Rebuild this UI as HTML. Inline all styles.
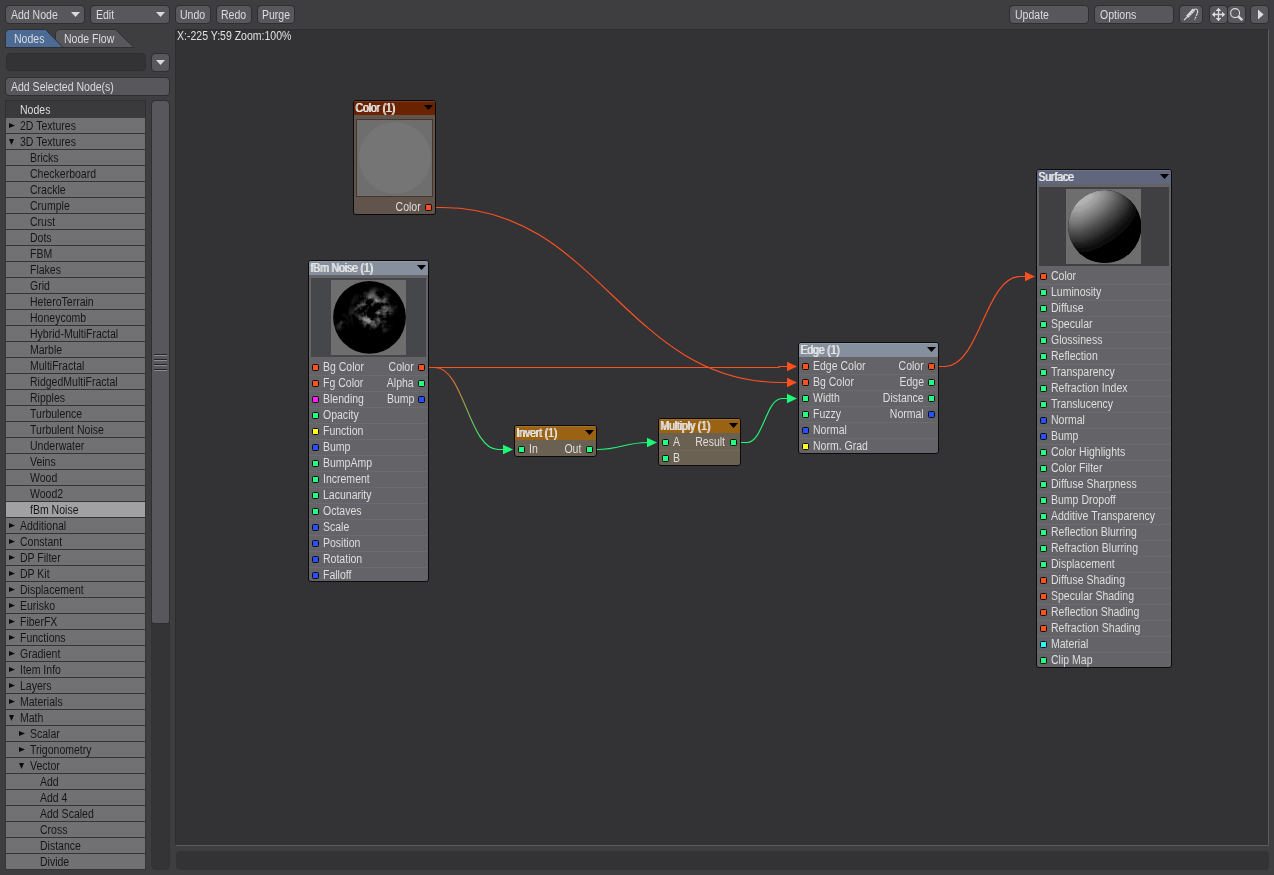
<!DOCTYPE html>
<html><head><meta charset="utf-8"><title>Node Editor</title><style>
*{box-sizing:border-box;margin:0;padding:0}
html,body{width:1274px;height:875px;overflow:hidden;background:#3e3e41;}
body{position:relative;font-family:"Liberation Sans",sans-serif;font-size:12px;color:#dcdcdc;line-height:1}
.a{position:absolute}
.t{display:inline-block;transform:scaleX(0.876);transform-origin:0 50%;white-space:nowrap}
.tr{display:inline-block;transform:scaleX(0.876);transform-origin:100% 50%;white-space:nowrap}
.btn{position:absolute;background:#58585c;border-radius:3.5px;box-shadow:0 0 0 1px #2f2f31;height:17px;top:6px;line-height:18px;padding-left:5px;white-space:nowrap}
.dd:after{content:"";position:absolute;right:4px;top:6px;width:9px;height:5px;background:#dadada;clip-path:polygon(0 0,100% 0,50% 100%)}
.p4{padding-left:4px}
.p0{padding-left:0}
.row{position:absolute;left:6px;width:139px;height:15px;background:#717173;color:#161616;line-height:16px;white-space:nowrap}
.row.sel{background:#a1a1a3}
.tri-r{position:absolute;top:5px;width:6px;height:5px;background:#0c0c0c;clip-path:polygon(0 0,100% 50%,0 100%)}
.tri-d{position:absolute;top:5px;width:5px;height:6px;background:#0c0c0c;clip-path:polygon(0 0,100% 0,50% 100%)}
.node{position:absolute;border:1px solid #0b0b0b;border-radius:3px;overflow:hidden}
.nh{position:absolute;left:0;top:0;right:0;height:14px;box-shadow:inset 0 1px 0 rgba(255,255,255,0.1);line-height:15px;padding-left:0.5px;color:#e4e4e4;white-space:nowrap}
.nh .t{text-shadow:1.1px 0 0 #e4e4e4;letter-spacing:-0.15px}
.nh:after{content:"";position:absolute;right:2px;top:4px;width:9px;height:5px;background:#000;clip-path:polygon(0 0,100% 0,50% 100%)}
.pl{position:absolute;height:16px;line-height:16px;white-space:nowrap;color:#dedede}
.dot{position:absolute;width:7px;height:7px;border-radius:1.5px;border:1px solid #0a0a0a}
.sep{position:absolute;left:0;right:0;height:1px;background:rgba(255,255,255,0.05)}
</style></head><body>
<div class="btn dd" style="left:6px;width:78px"><span class="t">Add Node</span></div>
<div class="btn dd" style="left:91px;width:78px"><span class="t">Edit</span></div>
<div class="btn p4" style="left:176px;width:34px"><span class="t">Undo</span></div>
<div class="btn p4" style="left:217px;width:34px"><span class="t">Redo</span></div>
<div class="btn p4" style="left:258px;width:36px"><span class="t">Purge</span></div>
<div class="btn " style="left:1010px;width:78px"><span class="t">Update</span></div>
<div class="btn " style="left:1095px;width:78px"><span class="t">Options</span></div>
<div class="btn p0" style="left:1180px;width:22px"><svg class="a" style="left:0;top:0" width="22" height="17" viewBox="0 0 22 17" fill="none" stroke="#dcdcdc"><path d="M4 14.1 L7.6 10.5" stroke-width="1.1"/><path d="M7.3 10.7 L13.9 3.6" stroke-width="3.1"/><path d="M9.3 9.5 l0.1 -0.1 M11.2 7.4 l0.1 -0.1 M13 5.4 l0.1 -0.1" stroke="#68686c" stroke-width="0.9" stroke-linecap="round"/><path d="M14 3.5 C15.6 2.5 17.6 3.2 17.7 5.3 C17.7 6.3 17.4 7 17 8" stroke-width="1.15"/><path d="M17 8 L14.5 14" stroke-width="1.15" stroke-dasharray="2 0.9"/></svg></div>
<div class="btn p0" style="left:1210px;width:17px"><svg class="a" style="left:0;top:0" width="17" height="17" viewBox="0 0 17 17" fill="#dcdcdc" stroke="#dcdcdc"><path d="M3 8.5 H14 M8.5 3 V14" stroke-width="1.3" fill="none"/><path d="M8.5 1.8 L11.3 5 H5.7 Z M8.5 15.2 L11.3 12 H5.7 Z M1.8 8.5 L5 5.7 V11.3 Z M15.2 8.5 L12 5.7 V11.3 Z" stroke="none"/></svg></div>
<div class="btn p0" style="left:1228px;width:17px"><svg class="a" style="left:0;top:0" width="17" height="17" viewBox="0 0 17 17" fill="none" stroke="#dcdcdc"><circle cx="7.1" cy="7.1" r="4.5" stroke-width="1.15"/><path d="M10.2 10.4 L14.3 14.2" stroke-width="2.4"/></svg></div>
<div class="btn p0" style="left:1251px;width:17px"><svg class="a" style="left:0;top:0" width="17" height="17" viewBox="0 0 17 17" fill="#dcdcdc"><path d="M7 3.6 L12.6 8.5 L7 13.4 Z"/></svg></div>
<svg class="a" style="left:0;top:24px" width="140" height="28" viewBox="0 24 140 28"><path d="M55.5 47.5 V33.5 Q55.5 29.5 59.5 29.5 H115.5 L134 47.5 Z" fill="#58585c" stroke="#2f2f31" stroke-width="1"/><path d="M5.5 47.5 V33.5 Q5.5 29.5 9.5 29.5 H45.5 L63 47.5 Z" fill="#4b6b94" stroke="#2f2f31" stroke-width="1"/></svg>
<div class="a" style="left:14px;top:32px;line-height:15px"><span class="t">Nodes</span></div>
<div class="a" style="left:64px;top:32px;line-height:15px"><span class="t">Node Flow</span></div>
<div class="a" style="left:6px;top:53px;width:140px;height:18px;background:#333335;border-radius:4px;border:1px solid #2f2f31"></div>
<div class="btn dd" style="left:152px;top:54px;width:17px"></div>
<div class="btn" style="left:6px;top:78px;width:163px"><span class="t">Add Selected Node(s)</span></div>
<div class="a" style="left:5px;top:100px;width:141px;height:18px;background:#3a3a3c;border:1px solid #2f2f31;border-bottom:0;line-height:19px;padding-left:14px"><span class="t">Nodes</span></div>
<div class="a" style="left:5px;top:118px;width:141px;height:752px;background:#353537"></div>
<div class="row" style="top:118px;padding-left:14px"><i class="tri-r" style="left:3px"></i><span class="t">2D Textures</span></div>
<div class="row" style="top:134px;padding-left:14px"><i class="tri-d" style="left:3px"></i><span class="t">3D Textures</span></div>
<div class="row" style="top:150px;padding-left:24px"><span class="t">Bricks</span></div>
<div class="row" style="top:166px;padding-left:24px"><span class="t">Checkerboard</span></div>
<div class="row" style="top:182px;padding-left:24px"><span class="t">Crackle</span></div>
<div class="row" style="top:198px;padding-left:24px"><span class="t">Crumple</span></div>
<div class="row" style="top:214px;padding-left:24px"><span class="t">Crust</span></div>
<div class="row" style="top:230px;padding-left:24px"><span class="t">Dots</span></div>
<div class="row" style="top:246px;padding-left:24px"><span class="t">FBM</span></div>
<div class="row" style="top:262px;padding-left:24px"><span class="t">Flakes</span></div>
<div class="row" style="top:278px;padding-left:24px"><span class="t">Grid</span></div>
<div class="row" style="top:294px;padding-left:24px"><span class="t">HeteroTerrain</span></div>
<div class="row" style="top:310px;padding-left:24px"><span class="t">Honeycomb</span></div>
<div class="row" style="top:326px;padding-left:24px"><span class="t">Hybrid-MultiFractal</span></div>
<div class="row" style="top:342px;padding-left:24px"><span class="t">Marble</span></div>
<div class="row" style="top:358px;padding-left:24px"><span class="t">MultiFractal</span></div>
<div class="row" style="top:374px;padding-left:24px"><span class="t">RidgedMultiFractal</span></div>
<div class="row" style="top:390px;padding-left:24px"><span class="t">Ripples</span></div>
<div class="row" style="top:406px;padding-left:24px"><span class="t">Turbulence</span></div>
<div class="row" style="top:422px;padding-left:24px"><span class="t">Turbulent Noise</span></div>
<div class="row" style="top:438px;padding-left:24px"><span class="t">Underwater</span></div>
<div class="row" style="top:454px;padding-left:24px"><span class="t">Veins</span></div>
<div class="row" style="top:470px;padding-left:24px"><span class="t">Wood</span></div>
<div class="row" style="top:486px;padding-left:24px"><span class="t">Wood2</span></div>
<div class="row sel" style="top:502px;padding-left:24px"><span class="t">fBm Noise</span></div>
<div class="row" style="top:518px;padding-left:14px"><i class="tri-r" style="left:3px"></i><span class="t">Additional</span></div>
<div class="row" style="top:534px;padding-left:14px"><i class="tri-r" style="left:3px"></i><span class="t">Constant</span></div>
<div class="row" style="top:550px;padding-left:14px"><i class="tri-r" style="left:3px"></i><span class="t">DP Filter</span></div>
<div class="row" style="top:566px;padding-left:14px"><i class="tri-r" style="left:3px"></i><span class="t">DP Kit</span></div>
<div class="row" style="top:582px;padding-left:14px"><i class="tri-r" style="left:3px"></i><span class="t">Displacement</span></div>
<div class="row" style="top:598px;padding-left:14px"><i class="tri-r" style="left:3px"></i><span class="t">Eurisko</span></div>
<div class="row" style="top:614px;padding-left:14px"><i class="tri-r" style="left:3px"></i><span class="t">FiberFX</span></div>
<div class="row" style="top:630px;padding-left:14px"><i class="tri-r" style="left:3px"></i><span class="t">Functions</span></div>
<div class="row" style="top:646px;padding-left:14px"><i class="tri-r" style="left:3px"></i><span class="t">Gradient</span></div>
<div class="row" style="top:662px;padding-left:14px"><i class="tri-r" style="left:3px"></i><span class="t">Item Info</span></div>
<div class="row" style="top:678px;padding-left:14px"><i class="tri-r" style="left:3px"></i><span class="t">Layers</span></div>
<div class="row" style="top:694px;padding-left:14px"><i class="tri-r" style="left:3px"></i><span class="t">Materials</span></div>
<div class="row" style="top:710px;padding-left:14px"><i class="tri-d" style="left:3px"></i><span class="t">Math</span></div>
<div class="row" style="top:726px;padding-left:24px"><i class="tri-r" style="left:13px"></i><span class="t">Scalar</span></div>
<div class="row" style="top:742px;padding-left:24px"><i class="tri-r" style="left:13px"></i><span class="t">Trigonometry</span></div>
<div class="row" style="top:758px;padding-left:24px"><i class="tri-d" style="left:13px"></i><span class="t">Vector</span></div>
<div class="row" style="top:774px;padding-left:34px"><span class="t">Add</span></div>
<div class="row" style="top:790px;padding-left:34px"><span class="t">Add 4</span></div>
<div class="row" style="top:806px;padding-left:34px"><span class="t">Add Scaled</span></div>
<div class="row" style="top:822px;padding-left:34px"><span class="t">Cross</span></div>
<div class="row" style="top:838px;padding-left:34px"><span class="t">Distance</span></div>
<div class="row" style="top:854px;padding-left:34px"><span class="t">Divide</span></div>
<div class="a" style="left:152px;top:101px;width:17px;height:768px;background:#343436;border-radius:4px;box-shadow:0 0 0 1px #323234"></div>
<div class="a" style="left:152px;top:101px;width:17px;height:522px;background:#58585c;border-radius:4px 4px 2px 2px;box-shadow:0 0 0 1px #2f2f31"></div>
<div class="a" style="left:154px;top:354px;width:13px;height:1px;background:#242426"></div>
<div class="a" style="left:154px;top:355px;width:13px;height:1px;background:#8c8c90"></div>
<div class="a" style="left:154px;top:359px;width:13px;height:1px;background:#242426"></div>
<div class="a" style="left:154px;top:360px;width:13px;height:1px;background:#8c8c90"></div>
<div class="a" style="left:154px;top:364px;width:13px;height:1px;background:#242426"></div>
<div class="a" style="left:154px;top:365px;width:13px;height:1px;background:#8c8c90"></div>
<div class="a" style="left:154px;top:369px;width:13px;height:1px;background:#242426"></div>
<div class="a" style="left:154px;top:370px;width:13px;height:1px;background:#8c8c90"></div>
<div class="a" style="left:175px;top:29px;width:1094px;height:817px;background:#333335;border-left:1px solid #2d2d2f;border-top:1px solid #2d2d2f;border-right:1px solid #5b5b5d;border-bottom:1px solid #5b5b5d"></div>
<div class="a" style="left:177px;top:29px;line-height:14px;color:#e0e0e0"><span class="t">X:-225 Y:59 Zoom:100%</span></div>
<div class="a" style="left:176px;top:851px;width:1093px;height:19px;background:#333335;border-radius:4px"></div>
<svg class="a" style="left:0;top:0" width="1274" height="875" viewBox="0 0 1274 875" fill="none" stroke-width="1.15"><defs><linearGradient id="rg" gradientUnits="userSpaceOnUse" x1="440" y1="370" x2="490" y2="445"><stop offset="0" stop-color="#ff5020"/><stop offset="1" stop-color="#20f878"/></linearGradient></defs><path d="M436 207.5 H442 C598.4 207.5 625.6 382.5 782 382.5 H788" stroke="#ff5020"/><path d="M429 367.5 H779 V366.5 H788" stroke="#ff5020"/><path d="M429 367.5 H435 C464.0 367.5 469.0 449.5 498 449.5 H504" stroke="url(#rg)"/><path d="M597 449.5 H597 C620.5 449.5 624.5 442.5 648 442.5 H648" stroke="#20f878"/><path d="M741 442.5 H747 C763.1 442.5 765.9 398.5 782 398.5 H788" stroke="#20f878"/><path d="M939 366.5 H945 C979.5 366.5 985.5 276.5 1020 276.5 H1026" stroke="#ff5020"/><path d="M797 382.5 L787 377.7 V387.3 Z" fill="#ff5020"/><path d="M797 366.5 L787 361.7 V371.3 Z" fill="#ff5020"/><path d="M513 449.5 L503 444.7 V454.3 Z" fill="#20f878"/><path d="M657 442.5 L647 437.7 V447.3 Z" fill="#20f878"/><path d="M797 398.5 L787 393.7 V403.3 Z" fill="#20f878"/><path d="M1035 276.5 L1025 271.7 V281.3 Z" fill="#ff5020"/></svg>
<div class="node" style="left:353px;top:100px;width:83px;height:115px;background:#60544c">
<div class="nh" style="background:#692300"><span class="t">Color (1)</span></div>
<div class="a" style="left:2px;top:18px;width:77px;height:78px;background:#6e6e6e;border:1px solid #46362d"><div class="a" style="left:1.5px;top:2px;width:72px;height:72px;border-radius:50%;background:#757575"></div></div>
<i class="dot" style="right:3px;top:103.0px;background:#ff5020"></i>
<div class="pl" style="right:14px;top:98.0px"><span class="tr">Color</span></div>
</div>
<div class="node" style="left:308px;top:260px;width:121px;height:322px;background:#646468">
<div class="nh" style="background:#868f9d"><span class="t">fBm Noise (1)</span></div>
<div class="a" style="left:2px;top:17px;width:115px;height:79px;background:#46474b"></div><svg class="a" style="left:22px;top:19px" width="75" height="75" viewBox="0 0 75 75"><defs><filter id="fn" x="0" y="0" width="100%" height="100%"><feTurbulence type="fractalNoise" baseFrequency="0.085" numOctaves="5" seed="11"/><feColorMatrix type="matrix" values="0 0 0 0 0.56  0 0 0 0 0.56  0 0 0 0 0.56  3.6 0 0 0 -1.6"/></filter><radialGradient id="fm" cx="0.56" cy="0.42" r="0.34"><stop offset="0" stop-color="#fff" stop-opacity="0.9"/><stop offset="0.5" stop-color="#fff" stop-opacity="0.7"/><stop offset="1" stop-color="#fff" stop-opacity="0"/></radialGradient><radialGradient id="fm2" cx="0.12" cy="0.55" r="0.14"><stop offset="0" stop-color="#fff" stop-opacity="0.5"/><stop offset="1" stop-color="#fff" stop-opacity="0"/></radialGradient><mask id="fk"><rect width="75" height="75" fill="url(#fm)"/><rect width="75" height="75" fill="url(#fm2)"/></mask><clipPath id="fc"><circle cx="38.5" cy="37.3" r="36.4"/></clipPath></defs><rect width="75" height="75" fill="#6e6e6e"/><circle cx="38.5" cy="37.3" r="36.4" fill="#000"/><g clip-path="url(#fc)"><g mask="url(#fk)"><rect width="75" height="75" fill="#8a8a8a" filter="url(#fn)"/></g></g></svg>
<i class="dot" style="left:3px;top:103.0px;background:#ff5020"></i>
<div class="pl" style="left:14px;top:98.0px"><span class="t">Bg Color</span></div>
<i class="dot" style="right:3px;top:103.0px;background:#ff5020"></i>
<div class="pl" style="right:14px;top:98.0px"><span class="tr">Color</span></div>
<div class="sep" style="top:114.0px"></div>
<i class="dot" style="left:3px;top:119.0px;background:#ff5020"></i>
<div class="pl" style="left:14px;top:114.0px"><span class="t">Fg Color</span></div>
<i class="dot" style="right:3px;top:119.0px;background:#20ff80"></i>
<div class="pl" style="right:14px;top:114.0px"><span class="tr">Alpha</span></div>
<div class="sep" style="top:130.0px"></div>
<i class="dot" style="left:3px;top:135.0px;background:#ff20ff"></i>
<div class="pl" style="left:14px;top:130.0px"><span class="t">Blending</span></div>
<i class="dot" style="right:3px;top:135.0px;background:#2850ff"></i>
<div class="pl" style="right:14px;top:130.0px"><span class="tr">Bump</span></div>
<div class="sep" style="top:146.0px"></div>
<i class="dot" style="left:3px;top:151.0px;background:#20ff80"></i>
<div class="pl" style="left:14px;top:146.0px"><span class="t">Opacity</span></div>
<div class="sep" style="top:162.0px"></div>
<i class="dot" style="left:3px;top:167.0px;background:#ffff20"></i>
<div class="pl" style="left:14px;top:162.0px"><span class="t">Function</span></div>
<div class="sep" style="top:178.0px"></div>
<i class="dot" style="left:3px;top:183.0px;background:#2850ff"></i>
<div class="pl" style="left:14px;top:178.0px"><span class="t">Bump</span></div>
<div class="sep" style="top:194.0px"></div>
<i class="dot" style="left:3px;top:199.0px;background:#20ff80"></i>
<div class="pl" style="left:14px;top:194.0px"><span class="t">BumpAmp</span></div>
<div class="sep" style="top:210.0px"></div>
<i class="dot" style="left:3px;top:215.0px;background:#20ff80"></i>
<div class="pl" style="left:14px;top:210.0px"><span class="t">Increment</span></div>
<div class="sep" style="top:226.0px"></div>
<i class="dot" style="left:3px;top:231.0px;background:#20ff80"></i>
<div class="pl" style="left:14px;top:226.0px"><span class="t">Lacunarity</span></div>
<div class="sep" style="top:242.0px"></div>
<i class="dot" style="left:3px;top:247.0px;background:#20ff80"></i>
<div class="pl" style="left:14px;top:242.0px"><span class="t">Octaves</span></div>
<div class="sep" style="top:258.0px"></div>
<i class="dot" style="left:3px;top:263.0px;background:#2850ff"></i>
<div class="pl" style="left:14px;top:258.0px"><span class="t">Scale</span></div>
<div class="sep" style="top:274.0px"></div>
<i class="dot" style="left:3px;top:279.0px;background:#2850ff"></i>
<div class="pl" style="left:14px;top:274.0px"><span class="t">Position</span></div>
<div class="sep" style="top:290.0px"></div>
<i class="dot" style="left:3px;top:295.0px;background:#2850ff"></i>
<div class="pl" style="left:14px;top:290.0px"><span class="t">Rotation</span></div>
<div class="sep" style="top:306.0px"></div>
<i class="dot" style="left:3px;top:311.0px;background:#2850ff"></i>
<div class="pl" style="left:14px;top:306.0px"><span class="t">Falloff</span></div>
</div>
<div class="node" style="left:514px;top:425px;width:83px;height:32px;background:#6b6152">
<div class="nh" style="background:#9a6313"><span class="t">Invert (1)</span></div>

<i class="dot" style="left:3px;top:20.0px;background:#20ff80"></i>
<div class="pl" style="left:14px;top:15.0px"><span class="t">In</span></div>
<i class="dot" style="right:3px;top:20.0px;background:#20ff80"></i>
<div class="pl" style="right:15px;top:15.0px"><span class="tr">Out</span></div>
</div>
<div class="node" style="left:658px;top:418px;width:83px;height:48px;background:#6b6152">
<div class="nh" style="background:#9a6313"><span class="t">Multiply (1)</span></div>

<i class="dot" style="left:3px;top:20.0px;background:#20ff80"></i>
<div class="pl" style="left:14px;top:15.0px"><span class="t">A</span></div>
<i class="dot" style="right:3px;top:20.0px;background:#20ff80"></i>
<div class="pl" style="right:15px;top:15.0px"><span class="tr">Result</span></div>
<div class="sep" style="top:31.0px"></div>
<i class="dot" style="left:3px;top:36.0px;background:#20ff80"></i>
<div class="pl" style="left:14px;top:31.0px"><span class="t">B</span></div>
</div>
<div class="node" style="left:798px;top:342px;width:141px;height:112px;background:#646468">
<div class="nh" style="background:#868f9d"><span class="t">Edge (1)</span></div>

<i class="dot" style="left:3px;top:20.0px;background:#ff5020"></i>
<div class="pl" style="left:14px;top:15.0px"><span class="t">Edge Color</span></div>
<i class="dot" style="right:3px;top:20.0px;background:#ff5020"></i>
<div class="pl" style="right:14px;top:15.0px"><span class="tr">Color</span></div>
<div class="sep" style="top:31.0px"></div>
<i class="dot" style="left:3px;top:36.0px;background:#ff5020"></i>
<div class="pl" style="left:14px;top:31.0px"><span class="t">Bg Color</span></div>
<i class="dot" style="right:3px;top:36.0px;background:#20ff80"></i>
<div class="pl" style="right:14px;top:31.0px"><span class="tr">Edge</span></div>
<div class="sep" style="top:47.0px"></div>
<i class="dot" style="left:3px;top:52.0px;background:#20ff80"></i>
<div class="pl" style="left:14px;top:47.0px"><span class="t">Width</span></div>
<i class="dot" style="right:3px;top:52.0px;background:#20ff80"></i>
<div class="pl" style="right:14px;top:47.0px"><span class="tr">Distance</span></div>
<div class="sep" style="top:63.0px"></div>
<i class="dot" style="left:3px;top:68.0px;background:#20ff80"></i>
<div class="pl" style="left:14px;top:63.0px"><span class="t">Fuzzy</span></div>
<i class="dot" style="right:3px;top:68.0px;background:#2850ff"></i>
<div class="pl" style="right:14px;top:63.0px"><span class="tr">Normal</span></div>
<div class="sep" style="top:79.0px"></div>
<i class="dot" style="left:3px;top:84.0px;background:#2850ff"></i>
<div class="pl" style="left:14px;top:79.0px"><span class="t">Normal</span></div>
<div class="sep" style="top:95.0px"></div>
<i class="dot" style="left:3px;top:100.0px;background:#ffff20"></i>
<div class="pl" style="left:14px;top:95.0px"><span class="t">Norm. Grad</span></div>
</div>
<div class="node" style="left:1036px;top:169px;width:136px;height:499px;background:#646468">
<div class="nh" style="background:#61667f"><span class="t">Surface</span></div>
<div class="a" style="left:2px;top:17px;width:130px;height:79px;background:#404043"></div><svg class="a" style="left:29px;top:19px" width="75" height="75" viewBox="0 0 75 75"><defs><radialGradient id="sg" cx="0.28" cy="0.12" r="0.78"><stop offset="0" stop-color="#a8a8a8"/><stop offset="0.35" stop-color="#7a7a7a"/><stop offset="0.7" stop-color="#2c2c2c"/><stop offset="0.9" stop-color="#000"/></radialGradient></defs><rect width="75" height="75" fill="#6e6e6e"/><defs><clipPath id="sc"><circle cx="38.7" cy="37.6" r="36.5"/></clipPath><filter id="sb" x="-10%" y="-10%" width="120%" height="120%"><feGaussianBlur stdDeviation="1.1"/></filter></defs><circle cx="38.7" cy="37.6" r="36.5" fill="#000"/><g clip-path="url(#sc)"><g filter="url(#sb)"><rect x="-10" y="-10" width="95" height="95" fill="#000"/><path d="M-1.5,-2.0 -1.5,-1.0 -1.5,-0.0 -1.5,1.0 -1.5,2.0 -1.5,3.0 -1.5,4.0 -1.5,5.0 -1.5,6.0 -1.5,7.0 -1.5,8.0 -1.5,9.0 -1.5,10.0 -1.5,11.0 -1.5,12.0 -1.5,13.0 -1.5,14.0 -1.5,15.0 -1.5,16.0 -1.5,17.0 -1.5,18.0 -1.5,19.0 -1.5,20.0 -1.5,21.0 -1.5,22.0 -1.5,23.0 -1.5,24.0 -1.5,25.0 -1.5,26.0 -1.5,27.0 -1.5,28.0 -1.5,29.0 -1.5,30.0 -1.5,31.0 -1.5,32.0 -1.5,33.0 -1.5,34.0 -1.5,35.0 -1.5,36.0 -1.5,37.0 -1.5,38.0 -1.5,39.0 -1.5,40.0 -1.5,41.0 -1.5,42.0 -1.5,43.0 -1.5,44.0 -1.5,45.0 -1.5,46.0 -1.5,47.0 -1.5,48.0 -1.5,49.0 -1.5,50.0 -1.5,51.0 -1.5,52.0 -1.5,53.0 -1.5,54.0 -1.5,55.0 -1.5,56.0 -1.5,57.0 -1.5,58.0 -1.5,59.0 -1.5,60.0 -1.5,61.0 -1.5,62.0 -1.5,63.0 -1.5,64.0 -1.5,65.0 -1.5,66.0 -1.5,67.0 -1.5,68.0 -1.5,69.0 -1.5,70.0 -1.5,71.0 -1.5,72.0 -1.5,73.0 -1.5,74.0 -1.0,74.0 0.2,73.0 1.8,72.0 3.0,71.0 4.6,70.0 5.8,69.0 7.4,68.0 8.6,67.0 10.2,66.0 23.4,65.0 27.1,64.0 29.9,63.0 32.7,62.0 34.7,61.0 36.7,60.0 38.7,59.0 40.3,58.0 42.3,57.0 43.9,56.0 45.1,55.0 46.7,54.0 48.3,53.0 49.5,52.0 51.1,51.0 52.4,50.0 53.6,49.0 54.8,48.0 56.0,47.0 57.2,46.0 58.4,45.0 59.2,44.0 60.4,43.0 61.2,42.0 62.4,41.0 63.2,40.0 64.0,39.0 64.8,38.0 65.6,37.0 66.4,36.0 67.2,35.0 68.0,34.0 68.4,33.0 69.2,32.0 69.6,31.0 70.4,30.0 70.8,29.0 71.2,28.0 71.6,27.0 71.6,26.0 72.0,25.0 72.0,24.0 71.6,23.0 71.6,22.0 72.4,21.0 73.6,20.0 75.2,19.0 76.4,18.0 78.0,17.0 78.9,16.0 78.9,15.0 78.9,14.0 78.9,13.0 78.9,12.0 78.9,11.0 78.9,10.0 78.9,9.0 78.9,8.0 78.9,7.0 78.9,6.0 78.9,5.0 78.9,4.0 78.9,3.0 78.9,2.0 78.9,1.0 78.9,-0.0 78.9,-1.0 78.9,-2.0Z" fill="rgb(3,3,3)"/><path d="M-1.5,-2.0 -1.5,-1.0 -1.5,-0.0 -1.5,1.0 -1.5,2.0 -1.5,3.0 -1.5,4.0 -1.5,5.0 -1.5,6.0 -1.5,7.0 -1.5,8.0 -1.5,9.0 -1.5,10.0 -1.5,11.0 -1.5,12.0 -1.5,13.0 -1.5,14.0 -1.5,15.0 -1.5,16.0 -1.5,17.0 -1.5,18.0 -1.5,19.0 -1.5,20.0 -1.5,21.0 -1.5,22.0 -1.5,23.0 -1.5,24.0 -1.5,25.0 -1.5,26.0 -1.5,27.0 -1.5,28.0 -1.5,29.0 -1.5,30.0 -1.5,31.0 -1.5,32.0 -1.5,33.0 -1.5,34.0 -1.5,35.0 -1.5,36.0 -1.5,37.0 -1.5,38.0 -1.5,39.0 -1.5,40.0 -1.5,41.0 -1.5,42.0 -1.5,43.0 -1.5,44.0 -1.5,45.0 -1.5,46.0 -1.5,47.0 -1.5,48.0 -1.5,49.0 -1.5,50.0 -1.5,51.0 -1.5,52.0 -1.5,53.0 -1.5,54.0 -1.5,55.0 -1.5,56.0 -1.5,57.0 -1.5,58.0 -1.5,59.0 -1.5,60.0 -1.5,61.0 -1.5,62.0 -1.5,63.0 -1.5,64.0 -1.5,65.0 -1.5,66.0 -1.5,67.0 -1.5,68.0 -1.5,69.0 -1.5,70.0 -0.6,70.0 1.0,69.0 2.2,68.0 3.8,67.0 5.0,66.0 6.6,65.0 7.8,64.0 22.6,63.0 25.9,62.0 28.7,61.0 31.1,60.0 33.5,59.0 35.5,58.0 37.1,57.0 39.1,56.0 40.7,55.0 42.3,54.0 43.9,53.0 45.5,52.0 46.7,51.0 48.3,50.0 49.5,49.0 50.7,48.0 51.9,47.0 53.6,46.0 54.4,45.0 55.6,44.0 56.8,43.0 58.0,42.0 58.8,41.0 60.0,40.0 60.8,39.0 62.0,38.0 62.8,37.0 63.6,36.0 64.4,35.0 65.2,34.0 66.0,33.0 66.4,32.0 67.2,31.0 68.0,30.0 68.4,29.0 68.8,28.0 69.6,27.0 70.0,26.0 70.0,25.0 70.4,24.0 70.4,23.0 70.8,22.0 70.4,21.0 70.4,20.0 70.0,19.0 71.6,18.0 72.8,17.0 74.4,16.0 75.6,15.0 77.2,14.0 78.4,13.0 78.9,12.0 78.9,11.0 78.9,10.0 78.9,9.0 78.9,8.0 78.9,7.0 78.9,6.0 78.9,5.0 78.9,4.0 78.9,3.0 78.9,2.0 78.9,1.0 78.9,-0.0 78.9,-1.0 78.9,-2.0Z" fill="rgb(8,8,8)"/><path d="M-1.5,-2.0 -1.5,-1.0 -1.5,-0.0 -1.5,1.0 -1.5,2.0 -1.5,3.0 -1.5,4.0 -1.5,5.0 -1.5,6.0 -1.5,7.0 -1.5,8.0 -1.5,9.0 -1.5,10.0 -1.5,11.0 -1.5,12.0 -1.5,13.0 -1.5,14.0 -1.5,15.0 -1.5,16.0 -1.5,17.0 -1.5,18.0 -1.5,19.0 -1.5,20.0 -1.5,21.0 -1.5,22.0 -1.5,23.0 -1.5,24.0 -1.5,25.0 -1.5,26.0 -1.5,27.0 -1.5,28.0 -1.5,29.0 -1.5,30.0 -1.5,31.0 -1.5,32.0 -1.5,33.0 -1.5,34.0 -1.5,35.0 -1.5,36.0 -1.5,37.0 -1.5,38.0 -1.5,39.0 -1.5,40.0 -1.5,41.0 -1.5,42.0 -1.5,43.0 -1.5,44.0 -1.5,45.0 -1.5,46.0 -1.5,47.0 -1.5,48.0 -1.5,49.0 -1.5,50.0 -1.5,51.0 -1.5,52.0 -1.5,53.0 -1.5,54.0 -1.5,55.0 -1.5,56.0 -1.5,57.0 -1.5,58.0 -1.5,59.0 -1.5,60.0 -1.5,61.0 -1.5,62.0 -1.5,63.0 -1.5,64.0 -1.5,65.0 -1.5,66.0 -1.5,67.0 -1.5,67.0 0.2,66.0 1.4,65.0 3.0,64.0 4.2,63.0 5.4,62.0 21.0,61.0 24.2,60.0 27.1,59.0 29.5,58.0 31.9,57.0 33.9,56.0 35.9,55.0 37.5,54.0 39.1,53.0 40.7,52.0 42.3,51.0 43.9,50.0 45.1,49.0 46.7,48.0 47.9,47.0 49.5,46.0 50.7,45.0 51.9,44.0 53.2,43.0 54.4,42.0 55.2,41.0 56.4,40.0 57.6,39.0 58.4,38.0 59.2,37.0 60.4,36.0 61.2,35.0 62.0,34.0 62.8,33.0 63.6,32.0 64.4,31.0 65.2,30.0 65.6,29.0 66.4,28.0 66.8,27.0 67.6,26.0 68.0,25.0 68.4,24.0 68.8,23.0 69.2,22.0 69.2,21.0 69.2,20.0 69.2,19.0 69.2,18.0 68.4,17.0 69.2,16.0 70.8,15.0 72.0,14.0 73.6,13.0 74.8,12.0 76.4,11.0 77.6,10.0 78.9,9.0 78.9,8.0 78.9,7.0 78.9,6.0 78.9,5.0 78.9,4.0 78.9,3.0 78.9,2.0 78.9,1.0 78.9,-0.0 78.9,-1.0 78.9,-2.0Z" fill="rgb(14,14,14)"/><path d="M-1.5,-2.0 -1.5,-1.0 -1.5,-0.0 -1.5,1.0 -1.5,2.0 -1.5,3.0 -1.5,4.0 -1.5,5.0 -1.5,6.0 -1.5,7.0 -1.5,8.0 -1.5,9.0 -1.5,10.0 -1.5,11.0 -1.5,12.0 -1.5,13.0 -1.5,14.0 -1.5,15.0 -1.5,16.0 -1.5,17.0 -1.5,18.0 -1.5,19.0 -1.5,20.0 -1.5,21.0 -1.5,22.0 -1.5,23.0 -1.5,24.0 -1.5,25.0 -1.5,26.0 -1.5,27.0 -1.5,28.0 -1.5,29.0 -1.5,30.0 -1.5,31.0 -1.5,32.0 -1.5,33.0 -1.5,34.0 -1.5,35.0 -1.5,36.0 -1.5,37.0 -1.5,38.0 -1.5,39.0 -1.5,40.0 -1.5,41.0 -1.5,42.0 -1.5,43.0 -1.5,44.0 -1.5,45.0 -1.5,46.0 -1.5,47.0 -1.5,48.0 -1.5,49.0 -1.5,50.0 -1.5,51.0 -1.5,52.0 -1.5,53.0 -1.5,54.0 -1.5,55.0 -1.5,56.0 -1.5,57.0 -1.5,58.0 -1.5,59.0 -1.5,60.0 -1.5,61.0 -1.5,62.0 -1.5,63.0 -0.6,63.0 0.6,62.0 1.8,61.0 3.4,60.0 19.0,59.0 22.6,58.0 25.5,57.0 27.9,56.0 29.9,55.0 32.3,54.0 33.9,53.0 35.9,52.0 37.5,51.0 39.1,50.0 40.7,49.0 42.3,48.0 43.5,47.0 45.1,46.0 46.3,45.0 47.5,44.0 49.1,43.0 50.3,42.0 51.5,41.0 52.4,40.0 53.6,39.0 54.8,38.0 56.0,37.0 56.8,36.0 57.6,35.0 58.8,34.0 59.6,33.0 60.4,32.0 61.2,31.0 62.0,30.0 62.8,29.0 63.6,28.0 64.4,27.0 64.8,26.0 65.6,25.0 66.0,24.0 66.4,23.0 66.8,22.0 67.2,21.0 67.6,20.0 67.6,19.0 67.6,18.0 67.6,17.0 67.6,16.0 67.2,15.0 67.2,14.0 68.4,13.0 70.0,12.0 71.2,11.0 72.8,10.0 74.0,9.0 75.6,8.0 76.8,7.0 78.0,6.0 78.9,5.0 78.9,4.0 78.9,3.0 78.9,2.0 78.9,1.0 78.9,-0.0 78.9,-1.0 78.9,-2.0Z" fill="rgb(22,22,22)"/><path d="M-1.5,-2.0 -1.5,-1.0 -1.5,-0.0 -1.5,1.0 -1.5,2.0 -1.5,3.0 -1.5,4.0 -1.5,5.0 -1.5,6.0 -1.5,7.0 -1.5,8.0 -1.5,9.0 -1.5,10.0 -1.5,11.0 -1.5,12.0 -1.5,13.0 -1.5,14.0 -1.5,15.0 -1.5,16.0 -1.5,17.0 -1.5,18.0 -1.5,19.0 -1.5,20.0 -1.5,21.0 -1.5,22.0 -1.5,23.0 -1.5,24.0 -1.5,25.0 -1.5,26.0 -1.5,27.0 -1.5,28.0 -1.5,29.0 -1.5,30.0 -1.5,31.0 -1.5,32.0 -1.5,33.0 -1.5,34.0 -1.5,35.0 -1.5,36.0 -1.5,37.0 -1.5,38.0 -1.5,39.0 -1.5,40.0 -1.5,41.0 -1.5,42.0 -1.5,43.0 -1.5,44.0 -1.5,45.0 -1.5,46.0 -1.5,47.0 -1.5,48.0 -1.5,49.0 -1.5,50.0 -1.5,51.0 -1.5,52.0 -1.5,53.0 -1.5,54.0 -1.5,55.0 -1.5,56.0 -1.5,57.0 -1.5,58.0 -1.5,59.0 -0.2,59.0 1.0,58.0 16.2,57.0 20.2,56.0 23.4,55.0 25.9,54.0 28.3,53.0 30.3,52.0 32.3,51.0 33.9,50.0 35.5,49.0 37.5,48.0 39.1,47.0 40.3,46.0 41.9,45.0 43.1,44.0 44.7,43.0 45.9,42.0 47.1,41.0 48.3,40.0 49.5,39.0 50.7,38.0 51.9,37.0 53.2,36.0 54.0,35.0 55.2,34.0 56.0,33.0 56.8,32.0 58.0,31.0 58.8,30.0 59.6,29.0 60.4,28.0 61.2,27.0 62.0,26.0 62.4,25.0 63.2,24.0 63.6,23.0 64.4,22.0 64.8,21.0 65.2,20.0 65.6,19.0 65.6,18.0 66.0,17.0 66.0,16.0 66.0,15.0 65.6,14.0 65.2,13.0 64.8,12.0 66.4,11.0 67.6,10.0 69.2,9.0 70.4,8.0 72.0,7.0 73.2,6.0 74.4,5.0 76.0,4.0 77.2,3.0 78.9,2.0 78.9,1.0 78.9,-0.0 78.9,-1.0 78.9,-2.0Z" fill="rgb(31,31,31)"/><path d="M-1.5,-2.0 -1.5,-1.0 -1.5,-0.0 -1.5,1.0 -1.5,2.0 -1.5,3.0 -1.5,4.0 -1.5,5.0 -1.5,6.0 -1.5,7.0 -1.5,8.0 -1.5,9.0 -1.5,10.0 -1.5,11.0 -1.5,12.0 -1.5,13.0 -1.5,14.0 -1.5,15.0 -1.5,16.0 -1.5,17.0 -1.5,18.0 -1.5,19.0 -1.5,20.0 -1.5,21.0 -1.5,22.0 -1.5,23.0 -1.5,24.0 -1.5,25.0 -1.5,26.0 -1.5,27.0 -1.5,28.0 -1.5,29.0 -1.5,30.0 -1.5,31.0 -1.5,32.0 -1.5,33.0 -1.5,34.0 -1.5,35.0 -1.5,36.0 -1.5,37.0 -1.5,38.0 -1.5,39.0 -1.5,40.0 -1.5,41.0 -1.5,42.0 -1.5,43.0 -1.5,44.0 -1.5,45.0 -1.5,46.0 -1.5,47.0 -1.5,48.0 -1.5,49.0 -1.5,50.0 -1.5,51.0 -1.5,52.0 -1.5,53.0 -1.5,54.0 -1.5,55.0 -1.5,56.0 -1.0,56.0 0.2,55.0 17.8,54.0 21.0,53.0 23.8,52.0 25.9,51.0 28.3,50.0 30.3,49.0 31.9,48.0 33.9,47.0 35.5,46.0 37.1,45.0 38.3,44.0 39.9,43.0 41.5,42.0 42.7,41.0 43.9,40.0 45.5,39.0 46.7,38.0 47.9,37.0 49.1,36.0 49.9,35.0 51.1,34.0 52.4,33.0 53.2,32.0 54.4,31.0 55.2,30.0 56.0,29.0 56.8,28.0 57.6,27.0 58.4,26.0 59.2,25.0 60.0,24.0 60.8,23.0 61.2,22.0 62.0,21.0 62.4,20.0 62.8,19.0 63.2,18.0 63.6,17.0 64.0,16.0 64.0,15.0 64.0,14.0 64.0,13.0 63.6,12.0 63.2,11.0 62.8,10.0 64.0,9.0 65.6,8.0 66.8,7.0 68.4,6.0 69.6,5.0 70.8,4.0 72.4,3.0 73.6,2.0 75.2,1.0 76.4,-0.0 78.0,-1.0 78.9,-2.0Z" fill="rgb(41,41,41)"/><path d="M-1.5,-2.0 -1.5,-1.0 -1.5,-0.0 -1.5,1.0 -1.5,2.0 -1.5,3.0 -1.5,4.0 -1.5,5.0 -1.5,6.0 -1.5,7.0 -1.5,8.0 -1.5,9.0 -1.5,10.0 -1.5,11.0 -1.5,12.0 -1.5,13.0 -1.5,14.0 -1.5,15.0 -1.5,16.0 -1.5,17.0 -1.5,18.0 -1.5,19.0 -1.5,20.0 -1.5,21.0 -1.5,22.0 -1.5,23.0 -1.5,24.0 -1.5,25.0 -1.5,26.0 -1.5,27.0 -1.5,28.0 -1.5,29.0 -1.5,30.0 -1.5,31.0 -1.5,32.0 -1.5,33.0 -1.5,34.0 -1.5,35.0 -1.5,36.0 -1.5,37.0 -1.5,38.0 -1.5,39.0 -1.5,40.0 -1.5,41.0 -1.5,42.0 -1.5,43.0 -1.5,44.0 -1.5,45.0 -1.5,46.0 -1.5,47.0 -1.5,48.0 -1.5,49.0 -1.5,50.0 -1.5,51.0 -1.5,52.0 14.2,52.0 18.2,51.0 21.0,50.0 23.4,49.0 25.9,48.0 27.9,47.0 29.9,46.0 31.5,45.0 33.1,44.0 34.7,43.0 36.3,42.0 37.9,41.0 39.5,40.0 40.7,39.0 41.9,38.0 43.5,37.0 44.7,36.0 45.9,35.0 47.1,34.0 47.9,33.0 49.1,32.0 50.3,31.0 51.1,30.0 52.4,29.0 53.2,28.0 54.0,27.0 54.8,26.0 56.0,25.0 56.4,24.0 57.2,23.0 58.0,22.0 58.8,21.0 59.2,20.0 60.0,19.0 60.4,18.0 60.8,17.0 61.2,16.0 61.6,15.0 62.0,14.0 62.0,13.0 62.0,12.0 62.0,11.0 61.6,10.0 60.8,9.0 60.4,8.0 62.0,7.0 63.2,6.0 64.8,5.0 66.0,4.0 67.2,3.0 68.8,2.0 70.0,1.0 71.6,-0.0 72.8,-1.0 74.4,-2.0Z" fill="rgb(52,52,52)"/><path d="M-1.5,-2.0 -1.5,-1.0 -1.5,-0.0 -1.5,1.0 -1.5,2.0 -1.5,3.0 -1.5,4.0 -1.5,5.0 -1.5,6.0 -1.5,7.0 -1.5,8.0 -1.5,9.0 -1.5,10.0 -1.5,11.0 -1.5,12.0 -1.5,13.0 -1.5,14.0 -1.5,15.0 -1.5,16.0 -1.5,17.0 -1.5,18.0 -1.5,19.0 -1.5,20.0 -1.5,21.0 -1.5,22.0 -1.5,23.0 -1.5,24.0 -1.5,25.0 -1.5,26.0 -1.5,27.0 -1.5,28.0 -1.5,29.0 -1.5,30.0 -1.5,31.0 -1.5,32.0 -1.5,33.0 -1.5,34.0 -1.5,35.0 -1.5,36.0 -1.5,37.0 -1.5,38.0 -1.5,39.0 -1.5,40.0 -1.5,41.0 -1.5,42.0 -1.5,43.0 -1.5,44.0 -1.5,45.0 -1.5,46.0 -1.5,47.0 -1.5,48.0 -1.5,49.0 14.6,49.0 18.2,48.0 21.0,47.0 23.4,46.0 25.5,45.0 27.5,44.0 29.1,43.0 31.1,42.0 32.7,41.0 34.3,40.0 35.9,39.0 37.1,38.0 38.7,37.0 39.9,36.0 41.1,35.0 42.3,34.0 43.5,33.0 44.7,32.0 45.9,31.0 47.1,30.0 48.3,29.0 49.1,28.0 49.9,27.0 51.1,26.0 51.9,25.0 52.8,24.0 53.6,23.0 54.4,22.0 55.2,21.0 56.0,20.0 56.8,19.0 57.2,18.0 57.6,17.0 58.4,16.0 58.8,15.0 59.2,14.0 59.6,13.0 59.6,12.0 59.6,11.0 59.6,10.0 59.6,9.0 59.2,8.0 58.4,7.0 58.4,6.0 59.6,5.0 61.2,4.0 62.4,3.0 63.6,2.0 65.2,1.0 66.4,-0.0 68.0,-1.0 69.2,-2.0Z" fill="rgb(63,63,63)"/><path d="M-1.5,-2.0 -1.5,-1.0 -1.5,-0.0 -1.5,1.0 -1.5,2.0 -1.5,3.0 -1.5,4.0 -1.5,5.0 -1.5,6.0 -1.5,7.0 -1.5,8.0 -1.5,9.0 -1.5,10.0 -1.5,11.0 -1.5,12.0 -1.5,13.0 -1.5,14.0 -1.5,15.0 -1.5,16.0 -1.5,17.0 -1.5,18.0 -1.5,19.0 -1.5,20.0 -1.5,21.0 -1.5,22.0 -1.5,23.0 -1.5,24.0 -1.5,25.0 -1.5,26.0 -1.5,27.0 -1.5,28.0 -1.5,29.0 -1.5,30.0 -1.5,31.0 -1.5,32.0 -1.5,33.0 -1.5,34.0 -1.5,35.0 -1.5,36.0 -1.5,37.0 -1.5,38.0 -1.5,39.0 -1.5,40.0 -1.5,41.0 -1.5,42.0 -1.5,43.0 -1.5,44.0 -1.5,45.0 5.0,46.0 14.6,46.0 17.8,45.0 20.2,44.0 22.6,43.0 24.6,42.0 26.7,41.0 28.3,40.0 30.3,39.0 31.9,38.0 33.5,37.0 34.7,36.0 36.3,35.0 37.5,34.0 39.1,33.0 40.3,32.0 41.5,31.0 42.7,30.0 43.9,29.0 44.7,28.0 45.9,27.0 47.1,26.0 47.9,25.0 48.7,24.0 49.9,23.0 50.7,22.0 51.5,21.0 52.4,20.0 53.2,19.0 53.6,18.0 54.4,17.0 54.8,16.0 55.6,15.0 56.0,14.0 56.4,13.0 56.8,12.0 57.2,11.0 57.2,10.0 57.2,9.0 57.2,8.0 56.8,7.0 56.0,6.0 54.8,5.0 56.0,4.0 57.6,3.0 58.8,2.0 60.4,1.0 61.6,-0.0 62.8,-1.0 64.4,-2.0Z" fill="rgb(75,75,75)"/><path d="M-1.5,-2.0 -1.5,-1.0 -1.5,-0.0 -1.5,1.0 -1.5,2.0 -1.5,3.0 -1.5,4.0 -1.5,5.0 -1.5,6.0 -1.5,7.0 -1.5,8.0 -1.5,9.0 -1.5,10.0 -1.5,11.0 -1.5,12.0 -1.5,13.0 -1.5,14.0 -1.5,15.0 -1.5,16.0 -1.5,17.0 -1.5,18.0 -1.5,19.0 -1.5,20.0 -1.5,21.0 -1.5,22.0 -1.5,23.0 -1.5,24.0 -1.5,25.0 -1.5,26.0 -1.5,27.0 -1.5,28.0 -1.5,29.0 -1.5,30.0 -1.5,31.0 -1.5,32.0 -1.5,33.0 -1.5,34.0 -1.5,35.0 -1.5,36.0 -1.5,37.0 -1.5,38.0 -1.5,39.0 -1.5,40.0 -1.5,41.0 3.4,42.0 4.6,43.0 13.8,43.0 17.0,42.0 19.4,41.0 21.8,40.0 23.8,39.0 25.9,38.0 27.5,37.0 29.1,36.0 30.7,35.0 32.3,34.0 33.9,33.0 35.1,32.0 36.3,31.0 37.9,30.0 39.1,29.0 40.3,28.0 41.5,27.0 42.3,26.0 43.5,25.0 44.7,24.0 45.5,23.0 46.3,22.0 47.5,21.0 48.3,20.0 49.1,19.0 49.9,18.0 50.7,17.0 51.1,16.0 51.9,15.0 52.4,14.0 53.2,13.0 53.6,12.0 54.0,11.0 54.4,10.0 54.4,9.0 54.4,8.0 54.4,7.0 54.0,6.0 53.6,5.0 52.4,4.0 52.4,3.0 54.0,2.0 55.2,1.0 56.8,-0.0 58.0,-1.0 59.2,-2.0Z" fill="rgb(88,88,88)"/><path d="M-1.5,-2.0 -1.5,-1.0 -1.5,-0.0 -1.5,1.0 -1.5,2.0 -1.5,3.0 -1.5,4.0 -1.5,5.0 -1.5,6.0 -1.5,7.0 -1.5,8.0 -1.5,9.0 -1.5,10.0 -1.5,11.0 -1.5,12.0 -1.5,13.0 -1.5,14.0 -1.5,15.0 -1.5,16.0 -1.5,17.0 -1.5,18.0 -1.5,19.0 -1.5,20.0 -1.5,21.0 -1.5,22.0 -1.5,23.0 -1.5,24.0 -1.5,25.0 -1.5,26.0 -1.5,27.0 -1.5,28.0 -1.5,29.0 -1.5,30.0 -1.5,31.0 -1.5,32.0 -1.5,33.0 -1.5,34.0 -1.5,35.0 -1.5,36.0 -1.5,37.0 -1.5,38.0 3.4,39.0 5.0,40.0 12.2,40.0 15.8,39.0 18.2,38.0 20.6,37.0 22.6,36.0 24.6,35.0 26.3,34.0 27.9,33.0 29.5,32.0 31.1,31.0 32.3,30.0 33.9,29.0 35.1,28.0 36.3,27.0 37.5,26.0 38.7,25.0 39.9,24.0 41.1,23.0 41.9,22.0 43.1,21.0 43.9,20.0 44.7,19.0 45.5,18.0 46.3,17.0 47.1,16.0 47.9,15.0 48.7,14.0 49.1,13.0 49.9,12.0 50.3,11.0 50.7,10.0 51.1,9.0 51.1,8.0 51.5,7.0 51.5,6.0 51.1,5.0 50.7,4.0 49.5,3.0 48.7,2.0 50.3,1.0 51.5,-0.0 53.2,-1.0 54.4,-2.0Z" fill="rgb(101,101,101)"/><path d="M-1.5,-2.0 -1.5,-1.0 -1.5,-0.0 -1.5,1.0 -1.5,2.0 -1.5,3.0 -1.5,4.0 -1.5,5.0 -1.5,6.0 -1.5,7.0 -1.5,8.0 -1.5,9.0 -1.5,10.0 -1.5,11.0 -1.5,12.0 -1.5,13.0 -1.5,14.0 -1.5,15.0 -1.5,16.0 -1.5,17.0 -1.5,18.0 -1.5,19.0 -1.5,20.0 -1.5,21.0 -1.5,22.0 -1.5,23.0 -1.5,24.0 -1.5,25.0 -1.5,26.0 -1.5,27.0 -1.5,28.0 -1.5,29.0 -1.5,30.0 -1.5,31.0 -1.5,32.0 -1.5,33.0 -1.5,34.0 3.4,35.0 4.2,36.0 7.0,37.0 9.0,37.0 13.8,36.0 16.6,35.0 19.0,34.0 21.0,33.0 23.0,32.0 24.6,31.0 26.3,30.0 27.9,29.0 29.5,28.0 31.1,27.0 32.3,26.0 33.5,25.0 34.7,24.0 35.9,23.0 37.1,22.0 38.3,21.0 39.1,20.0 40.3,19.0 41.1,18.0 41.9,17.0 43.1,16.0 43.9,15.0 44.3,14.0 45.1,13.0 45.9,12.0 46.3,11.0 47.1,10.0 47.5,9.0 47.9,8.0 47.9,7.0 47.9,6.0 47.9,5.0 47.9,4.0 47.1,3.0 45.9,2.0 45.1,1.0 46.7,-0.0 47.9,-1.0 49.5,-2.0Z" fill="rgb(116,116,116)"/><path d="M-1.5,-2.0 -1.5,-1.0 -1.5,-0.0 -1.5,1.0 -1.5,2.0 -1.5,3.0 -1.5,4.0 -1.5,5.0 -1.5,6.0 -1.5,7.0 -1.5,8.0 -1.5,9.0 -1.5,10.0 -1.5,11.0 -1.5,12.0 -1.5,13.0 -1.5,14.0 -1.5,15.0 -1.5,16.0 -1.5,17.0 -1.5,18.0 -1.5,19.0 -1.5,20.0 -1.5,21.0 -1.5,22.0 -1.5,23.0 -1.5,24.0 -1.5,25.0 -1.5,26.0 -1.5,27.0 -1.5,28.0 -1.5,29.0 -1.5,30.0 -1.5,31.0 4.6,32.0 6.6,33.0 10.2,33.0 14.2,32.0 17.0,31.0 19.0,30.0 21.0,29.0 23.0,28.0 24.6,27.0 26.3,26.0 27.5,25.0 29.1,24.0 30.3,23.0 31.9,22.0 33.1,21.0 33.9,20.0 35.1,19.0 36.3,18.0 37.1,17.0 38.3,16.0 39.1,15.0 39.9,14.0 40.7,13.0 41.5,12.0 41.9,11.0 42.7,10.0 43.1,9.0 43.5,8.0 43.9,7.0 44.3,6.0 44.3,5.0 44.3,4.0 43.9,3.0 43.1,2.0 40.3,1.0 41.5,-0.0 43.1,-1.0 44.3,-2.0Z" fill="rgb(130,130,130)"/><path d="M-1.5,-2.0 -1.5,-1.0 -1.5,-0.0 -1.5,1.0 -1.5,2.0 -1.5,3.0 -1.5,4.0 -1.5,5.0 -1.5,6.0 -1.5,7.0 -1.5,8.0 -1.5,9.0 -1.5,10.0 -1.5,11.0 -1.5,12.0 -1.5,13.0 -1.5,14.0 -1.5,15.0 -1.5,16.0 -1.5,17.0 -1.5,18.0 -1.5,19.0 -1.5,20.0 -1.5,21.0 -1.5,22.0 -1.5,23.0 -1.5,24.0 -1.5,25.0 -1.5,26.0 -1.5,27.0 5.8,28.0 13.8,28.0 16.2,27.0 18.6,26.0 20.6,25.0 22.2,24.0 23.8,23.0 25.5,22.0 26.7,21.0 28.3,20.0 29.5,19.0 30.7,18.0 31.9,17.0 32.7,16.0 33.9,15.0 34.7,14.0 35.5,13.0 36.3,12.0 37.1,11.0 37.9,10.0 38.7,9.0 39.1,8.0 39.5,7.0 39.9,6.0 39.9,5.0 39.9,4.0 39.9,3.0 38.7,2.0 35.1,1.0 36.7,-0.0 37.9,-1.0 39.5,-2.0Z" fill="rgb(146,146,146)"/><path d="M-1.5,-2.0 -1.5,-1.0 -1.5,-0.0 -1.5,1.0 -1.5,2.0 -1.5,3.0 -1.5,4.0 -1.5,5.0 -1.5,6.0 -1.5,7.0 -1.5,8.0 -1.5,9.0 -1.5,10.0 -1.5,11.0 -1.5,12.0 -1.5,13.0 -1.5,14.0 -1.5,15.0 -1.5,16.0 -1.5,17.0 -1.5,18.0 -1.5,19.0 -1.5,20.0 -1.5,21.0 -1.5,22.0 -1.5,23.0 14.6,23.0 17.0,22.0 19.0,21.0 21.0,20.0 22.6,19.0 23.8,18.0 25.5,17.0 26.7,16.0 27.9,15.0 28.7,14.0 29.9,13.0 30.7,12.0 31.5,11.0 32.3,10.0 33.1,9.0 33.9,8.0 34.3,7.0 34.7,6.0 34.7,5.0 34.7,4.0 34.3,3.0 28.7,2.0 30.3,1.0 31.5,-0.0 33.1,-1.0 34.3,-2.0Z" fill="rgb(162,162,162)"/><path d="M-1.5,-2.0 -1.5,-1.0 -1.5,-0.0 -1.5,1.0 -1.5,2.0 -1.5,3.0 -1.5,4.0 -1.5,5.0 -1.5,6.0 -1.5,7.0 -1.5,8.0 -1.5,9.0 -1.5,10.0 -1.5,11.0 -1.5,12.0 -1.5,13.0 -1.5,14.0 -1.5,15.0 -1.5,16.0 -1.5,17.0 -1.5,18.0 -1.5,19.0 -1.5,20.0 -1.0,20.0 0.2,19.0 1.8,18.0 15.0,17.0 17.4,16.0 19.4,15.0 21.0,14.0 22.2,13.0 23.4,12.0 24.6,11.0 25.5,10.0 26.3,9.0 27.1,8.0 27.5,7.0 27.5,6.0 27.1,5.0 21.0,4.0 22.2,3.0 23.8,2.0 25.0,1.0 26.7,-0.0 27.9,-1.0 29.5,-2.0Z" fill="rgb(178,178,178)"/></g></g></svg>
<i class="dot" style="left:3px;top:103.0px;background:#ff5020"></i>
<div class="pl" style="left:14px;top:98.0px"><span class="t">Color</span></div>
<div class="sep" style="top:114.0px"></div>
<i class="dot" style="left:3px;top:119.0px;background:#20ff80"></i>
<div class="pl" style="left:14px;top:114.0px"><span class="t">Luminosity</span></div>
<div class="sep" style="top:130.0px"></div>
<i class="dot" style="left:3px;top:135.0px;background:#20ff80"></i>
<div class="pl" style="left:14px;top:130.0px"><span class="t">Diffuse</span></div>
<div class="sep" style="top:146.0px"></div>
<i class="dot" style="left:3px;top:151.0px;background:#20ff80"></i>
<div class="pl" style="left:14px;top:146.0px"><span class="t">Specular</span></div>
<div class="sep" style="top:162.0px"></div>
<i class="dot" style="left:3px;top:167.0px;background:#20ff80"></i>
<div class="pl" style="left:14px;top:162.0px"><span class="t">Glossiness</span></div>
<div class="sep" style="top:178.0px"></div>
<i class="dot" style="left:3px;top:183.0px;background:#20ff80"></i>
<div class="pl" style="left:14px;top:178.0px"><span class="t">Reflection</span></div>
<div class="sep" style="top:194.0px"></div>
<i class="dot" style="left:3px;top:199.0px;background:#20ff80"></i>
<div class="pl" style="left:14px;top:194.0px"><span class="t">Transparency</span></div>
<div class="sep" style="top:210.0px"></div>
<i class="dot" style="left:3px;top:215.0px;background:#20ff80"></i>
<div class="pl" style="left:14px;top:210.0px"><span class="t">Refraction Index</span></div>
<div class="sep" style="top:226.0px"></div>
<i class="dot" style="left:3px;top:231.0px;background:#20ff80"></i>
<div class="pl" style="left:14px;top:226.0px"><span class="t">Translucency</span></div>
<div class="sep" style="top:242.0px"></div>
<i class="dot" style="left:3px;top:247.0px;background:#2850ff"></i>
<div class="pl" style="left:14px;top:242.0px"><span class="t">Normal</span></div>
<div class="sep" style="top:258.0px"></div>
<i class="dot" style="left:3px;top:263.0px;background:#2850ff"></i>
<div class="pl" style="left:14px;top:258.0px"><span class="t">Bump</span></div>
<div class="sep" style="top:274.0px"></div>
<i class="dot" style="left:3px;top:279.0px;background:#20ff80"></i>
<div class="pl" style="left:14px;top:274.0px"><span class="t">Color Highlights</span></div>
<div class="sep" style="top:290.0px"></div>
<i class="dot" style="left:3px;top:295.0px;background:#20ff80"></i>
<div class="pl" style="left:14px;top:290.0px"><span class="t">Color Filter</span></div>
<div class="sep" style="top:306.0px"></div>
<i class="dot" style="left:3px;top:311.0px;background:#20ff80"></i>
<div class="pl" style="left:14px;top:306.0px"><span class="t">Diffuse Sharpness</span></div>
<div class="sep" style="top:322.0px"></div>
<i class="dot" style="left:3px;top:327.0px;background:#20ff80"></i>
<div class="pl" style="left:14px;top:322.0px"><span class="t">Bump Dropoff</span></div>
<div class="sep" style="top:338.0px"></div>
<i class="dot" style="left:3px;top:343.0px;background:#20ff80"></i>
<div class="pl" style="left:14px;top:338.0px"><span class="t">Additive Transparency</span></div>
<div class="sep" style="top:354.0px"></div>
<i class="dot" style="left:3px;top:359.0px;background:#20ff80"></i>
<div class="pl" style="left:14px;top:354.0px"><span class="t">Reflection Blurring</span></div>
<div class="sep" style="top:370.0px"></div>
<i class="dot" style="left:3px;top:375.0px;background:#20ff80"></i>
<div class="pl" style="left:14px;top:370.0px"><span class="t">Refraction Blurring</span></div>
<div class="sep" style="top:386.0px"></div>
<i class="dot" style="left:3px;top:391.0px;background:#20ff80"></i>
<div class="pl" style="left:14px;top:386.0px"><span class="t">Displacement</span></div>
<div class="sep" style="top:402.0px"></div>
<i class="dot" style="left:3px;top:407.0px;background:#ff5020"></i>
<div class="pl" style="left:14px;top:402.0px"><span class="t">Diffuse Shading</span></div>
<div class="sep" style="top:418.0px"></div>
<i class="dot" style="left:3px;top:423.0px;background:#ff5020"></i>
<div class="pl" style="left:14px;top:418.0px"><span class="t">Specular Shading</span></div>
<div class="sep" style="top:434.0px"></div>
<i class="dot" style="left:3px;top:439.0px;background:#ff5020"></i>
<div class="pl" style="left:14px;top:434.0px"><span class="t">Reflection Shading</span></div>
<div class="sep" style="top:450.0px"></div>
<i class="dot" style="left:3px;top:455.0px;background:#ff5020"></i>
<div class="pl" style="left:14px;top:450.0px"><span class="t">Refraction Shading</span></div>
<div class="sep" style="top:466.0px"></div>
<i class="dot" style="left:3px;top:471.0px;background:#20ffff"></i>
<div class="pl" style="left:14px;top:466.0px"><span class="t">Material</span></div>
<div class="sep" style="top:482.0px"></div>
<i class="dot" style="left:3px;top:487.0px;background:#20ff80"></i>
<div class="pl" style="left:14px;top:482.0px"><span class="t">Clip Map</span></div>
</div>
</body></html>
